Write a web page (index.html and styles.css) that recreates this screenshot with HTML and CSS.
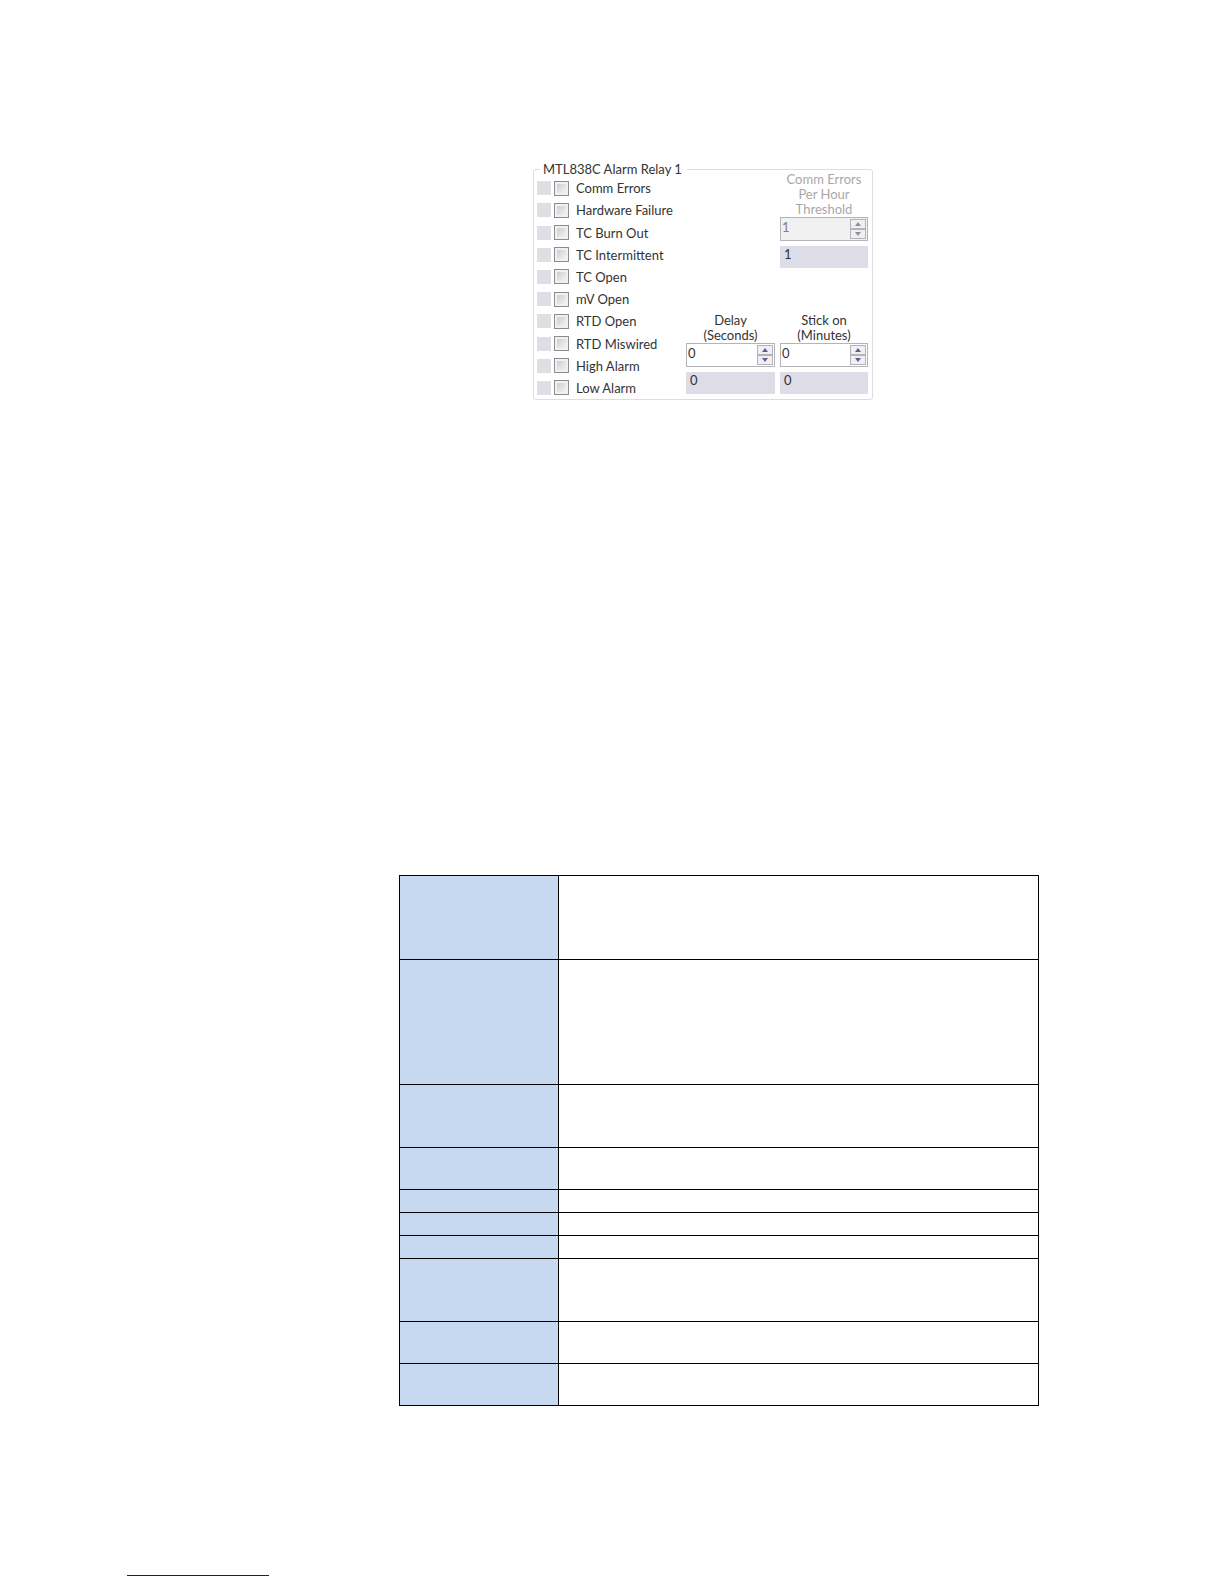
FILE: index.html
```
<!DOCTYPE html>
<html lang="en">
<head>
    <meta charset="UTF-8">
    <meta name="viewport" content="width=device-width, initial-scale=1.0">
    <title>MTL838C Alarm Relay</title>
    <link rel="stylesheet" href="styles.css">
</head>

<body>
    <main class="content">
        <fieldset class="relay">
            <legend>MTL838C Alarm Relay 1</legend>
            <div class="relay-body">
                <ul class="alarms">
                    <li><span class="state"></span><label><input type="checkbox">Comm Errors</label></li>
                    <li><span class="state"></span><label><input type="checkbox">Hardware Failure</label></li>
                    <li><span class="state"></span><label><input type="checkbox">TC Burn Out</label></li>
                    <li><span class="state"></span><label><input type="checkbox">TC Intermittent</label></li>
                    <li><span class="state"></span><label><input type="checkbox">TC Open</label></li>
                    <li><span class="state"></span><label><input type="checkbox">mV Open</label></li>
                    <li><span class="state"></span><label><input type="checkbox">RTD Open</label></li>
                    <li><span class="state"></span><label><input type="checkbox">RTD Miswired</label></li>
                    <li><span class="state"></span><label><input type="checkbox">High Alarm</label></li>
                    <li><span class="state"></span><label><input type="checkbox">Low Alarm</label></li>
                </ul>

                <div class="settings">
                    <div class="setting threshold">
                        <label for="threshold">Comm Errors<br>Per Hour<br>Threshold</label>
                        <div class="spinner disabled">
                            <input type="text" id="threshold" value="1" disabled>
                            <div class="arrows">
                                <button type="button" aria-label="Increase threshold" disabled><svg viewBox="0 0 6 4"><path d="M3 0L6 4H0Z"/></svg></button>
                                <button type="button" aria-label="Decrease threshold" disabled><svg viewBox="0 0 6 4"><path d="M0 0H6L3 4Z"/></svg></button>
                            </div>
                        </div>
                        <output for="threshold">1</output>
                    </div>

                    <div class="setting delay">
                        <label for="delay">Delay<br>(Seconds)</label>
                        <div class="spinner">
                            <input type="text" id="delay" value="0">
                            <div class="arrows">
                                <button type="button" aria-label="Increase delay"><svg viewBox="0 0 6 4"><path d="M3 0L6 4H0Z"/></svg></button>
                                <button type="button" aria-label="Decrease delay"><svg viewBox="0 0 6 4"><path d="M0 0H6L3 4Z"/></svg></button>
                            </div>
                        </div>
                        <output for="delay">0</output>
                    </div>

                    <div class="setting">
                        <label for="stick">Stick on<br>(Minutes)</label>
                        <div class="spinner">
                            <input type="text" id="stick" value="0">
                            <div class="arrows">
                                <button type="button" aria-label="Increase stick on"><svg viewBox="0 0 6 4"><path d="M3 0L6 4H0Z"/></svg></button>
                                <button type="button" aria-label="Decrease stick on"><svg viewBox="0 0 6 4"><path d="M0 0H6L3 4Z"/></svg></button>
                            </div>
                        </div>
                        <output for="stick">0</output>
                    </div>
                </div>
            </div>
        </fieldset>

        <table class="fields">
            <tr class="lines-4"><th></th><td></td></tr>
            <tr class="lines-6"><th></th><td></td></tr>
            <tr class="lines-3"><th></th><td></td></tr>
            <tr class="lines-2"><th></th><td></td></tr>
            <tr class="lines-1"><th></th><td></td></tr>
            <tr class="lines-1"><th></th><td></td></tr>
            <tr class="lines-1"><th></th><td></td></tr>
            <tr class="lines-3"><th></th><td></td></tr>
            <tr class="lines-2"><th></th><td></td></tr>
            <tr class="lines-2"><th></th><td></td></tr>
        </table>
    </main>

    <footer>
        <hr>
    </footer>
</body>

</html>
```
FILE: styles.css
```
* {
    box-sizing: border-box;
}

body {
    display: flex;
    flex-direction: column;
    min-height: 100vh;
    margin: 0;
    background-color: #fff;
    color: #333;
    font-family: Lato, Arial, sans-serif;
    font-size: 13px;
}

.content {
    padding: 161px 185px 0 399px;
}

/* Alarm relay panel */
.relay {
    max-width: 340px;
    margin: 0 0 0 134px;
    padding: 0 4px 0 3px;
    border: 1px solid #dcdce2;
    border-radius: 3px;
}

.relay legend {
    margin-left: 3px;
    padding: 0 5px 0 3px;
    line-height: 16px;
}

.relay-body {
    display: flex;
    min-height: 222px;
}

.alarms {
    display: flex;
    flex: 1;
    flex-direction: column;
    margin: 0;
    padding: 0;
    list-style: none;
}

.alarms li {
    display: flex;
    flex: 1;
    align-items: center;
    gap: 3px;
}

.alarms label {
    display: flex;
    align-items: center;
    gap: 7px;
    white-space: nowrap;
}

.state {
    width: 14px;
    height: 14px;
    background-color: #dedee5;
}

input[type="checkbox"] {
    appearance: none;
    width: 15px;
    height: 15px;
    margin: 0;
    border: 1px solid #8c8c8c;
    background: linear-gradient(135deg, #c4c8ca, #fafafa);
    box-shadow: inset 0 0 0 2px #f0f0f0;
}

input[type="checkbox"]:checked {
    background: #5a5f80;
}

.settings {
    display: grid;
    grid-template-columns: 89px 88px;
    column-gap: 5px;
    align-content: space-between;
    margin-top: -5px;
    padding-bottom: 5px;
}

.setting label {
    display: block;
    line-height: 15px;
    text-align: center;
}

.threshold {
    grid-column: 2;
}

.threshold label {
    color: #a8a8a8;
}

.delay {
    grid-column: 1;
}

.spinner {
    display: flex;
    height: 24px;
    margin-bottom: 5px;
    padding: 1px;
    border: 1px solid #b4b4b8;
    background-color: #fff;
}

.spinner input {
    flex: 1;
    min-width: 0;
    padding: 0 0 4px;
    border: 0;
    background: none;
    color: #333;
    font: inherit;
}

.arrows {
    display: flex;
    flex-direction: column;
    width: 16px;
}

.arrows button {
    display: flex;
    flex: 1;
    align-items: center;
    justify-content: center;
    padding: 0;
    border: 1px solid #b4b4b8;
    background-color: #f0f0f2;
}

.arrows svg {
    width: 6px;
    height: 4px;
    fill: #5a5f96;
}

.spinner.disabled {
    background-color: #f1f1f1;
}

.spinner.disabled input {
    color: #808080;
}

.spinner.disabled svg {
    fill: #909090;
}

.setting output {
    display: block;
    height: 22px;
    padding-left: 4px;
    background-color: #dcdde6;
    line-height: 16px;
}

/* Field table, row height follows the number of text lines */
.fields {
    width: 100%;
    margin-top: 475px;
    border-collapse: collapse;
    table-layout: fixed;
}

.fields th,
.fields td {
    padding: 0;
    border: 1px solid #000;
}

.fields th {
    width: 159px;
    background-color: #c6d9f1;
}

.lines-1 {
    height: 23px;
}

.lines-2 {
    height: 42px;
}

.lines-3 {
    height: 63px;
}

.lines-4 {
    height: 84px;
}

.lines-6 {
    height: 125px;
}

footer {
    margin-top: auto;
    padding: 0 127px 8px;
}

footer hr {
    width: 142px;
    margin: 0;
    border: 0;
    border-top: 1px solid #1a1a7c;
}
```
